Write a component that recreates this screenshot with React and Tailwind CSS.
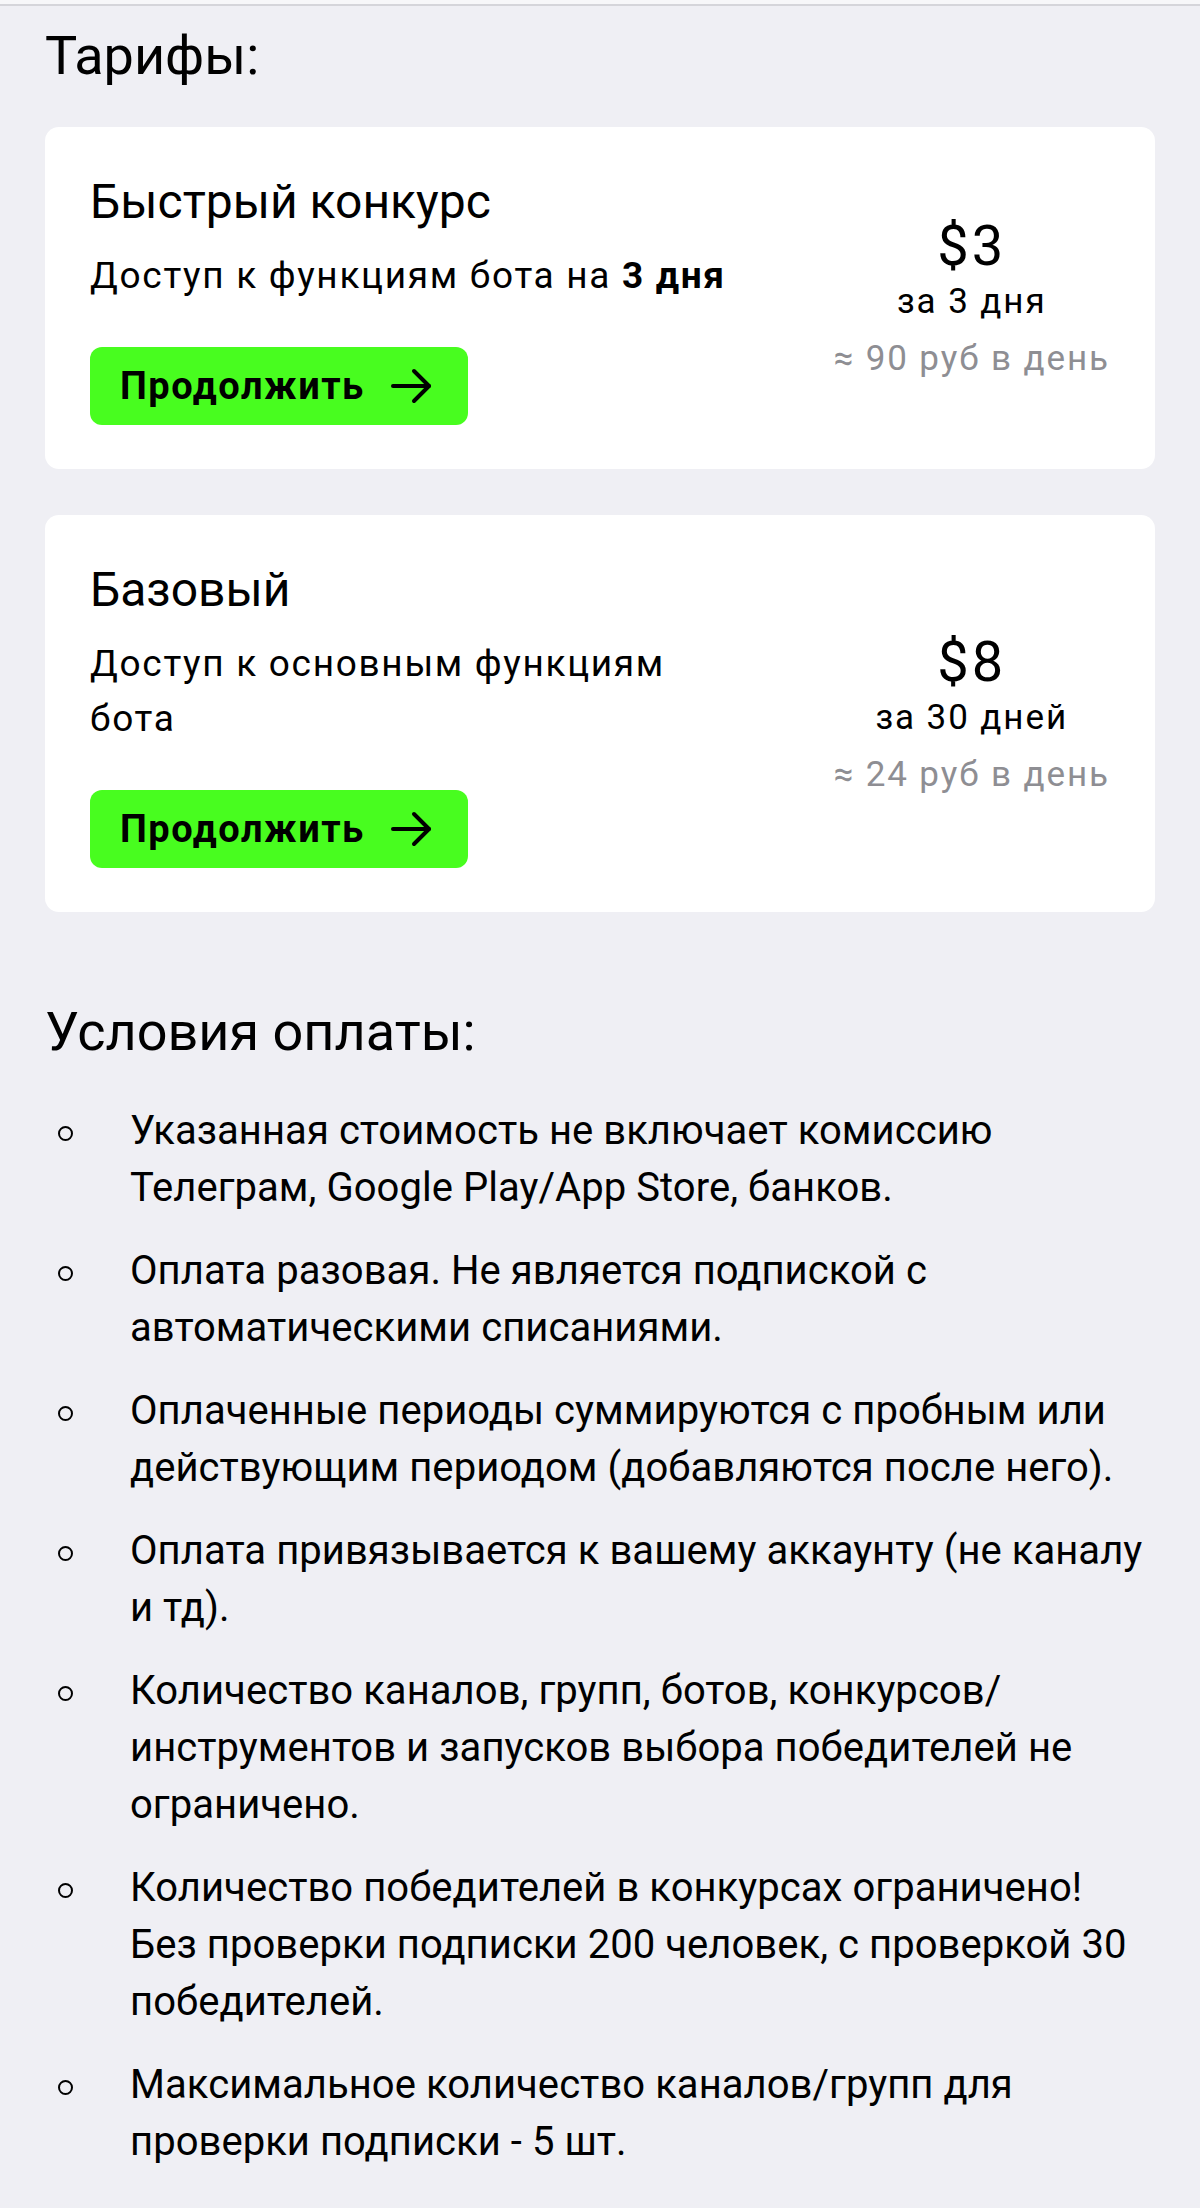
import React from 'react';

const plans = [
  {
    title: 'Быстрый конкурс',
    desc: [
      <>
        Доступ к функциям бота на <b className="font-bold">3 дня</b>
      </>,
    ],
    price: '$3',
    period: 'за 3 дня',
    perDay: '≈ 90 руб в день',
  },
  {
    title: 'Базовый',
    desc: ['Доступ к основным функциям', 'бота'],
    price: '$8',
    period: 'за 30 дней',
    perDay: '≈ 24 руб в день',
  },
];

const terms = [
  ['Указанная стоимость не включает комиссию', 'Телеграм, Google Play/App Store, банков.'],
  ['Оплата разовая. Не является подпиской с', 'автоматическими списаниями.'],
  ['Оплаченные периоды суммируются с пробным или', 'действующим периодом (добавляются после него).'],
  ['Оплата привязывается к вашему аккаунту (не каналу', 'и тд).'],
  ['Количество каналов, групп, ботов, конкурсов/', 'инструментов и запусков выбора победителей не', 'ограничено.'],
  ['Количество победителей в конкурсах ограничено!', 'Без проверки подписки 200 человек, с проверкой 30', 'победителей.'],
  ['Максимальное количество каналов/групп для', 'проверки подписки - 5 шт.'],
];

const Arrow = () => (
  <svg width="42" height="36" viewBox="0 0 42 36" fill="none" stroke="currentColor" strokeWidth="4" strokeLinecap="round" strokeLinejoin="round">
    <path d="M2 18h36" />
    <path d="M23 3l15 15-15 15" />
  </svg>
);

const PlanCard = ({ plan }) => (
  <div className="flex items-center gap-[40px] rounded-[14px] bg-white px-[45px] pt-[45px] pb-[44px]">
    <div className="flex flex-1 flex-col items-start">
      <h3 className="text-[48px] leading-[60px] font-normal text-black">{plan.title}</h3>
      <div className="mt-[16px] text-[37px] leading-[55px] tracking-[1.7px] text-black">
        {plan.desc.map((line, i) => (
          <span key={i} className="block whitespace-nowrap">{line}</span>
        ))}
      </div>
      <button className="mt-[44px] flex h-[78px] w-[378px] items-center gap-[26px] rounded-[12px] bg-[#48fd1f] pl-[30px] text-[38px] font-bold tracking-[1.5px] text-black">
        Продолжить
        <Arrow />
      </button>
    </div>
    <div className="flex shrink-0 flex-col items-center text-center">
      <div className="text-[56px] leading-[56px] tracking-[3px] text-black">{plan.price}</div>
      <div className="mt-[8px] whitespace-nowrap text-[35px] leading-[40px] tracking-[1.9px] text-black">{plan.period}</div>
      <div className="mt-[17px] whitespace-nowrap text-[35px] leading-[40px] tracking-[1.9px] text-[#8e8e93]">{plan.perDay}</div>
    </div>
  </div>
);

export default function App() {
  return (
    <div className="min-h-[2208px] bg-[#efeff4] font-['Roboto',sans-serif] text-black">
      <div className="h-[4px] bg-[#f7f7f9]" />
      <div className="h-[2px] bg-[#d5d5da]" />

      <div className="px-[45px]">
        <h2 className="mt-[16px] text-[54px] leading-[68px] font-normal">Тарифы:</h2>

        <div className="mt-[37px] flex flex-col gap-[46px]">
          {plans.map((p) => (
            <PlanCard key={p.title} plan={p} />
          ))}
        </div>

        <h2 className="mt-[86px] text-[54px] leading-[68px] font-normal">Условия оплаты:</h2>

        <ul className="mt-[36px] flex flex-col gap-[26px]">
          {terms.map((lines, i) => (
            <li key={i} className="flex">
              <div className="mt-[3px] flex h-[57px] w-[85px] shrink-0 items-center">
                <span className="ml-[13px] block h-[15px] w-[15px] rounded-full border-[2.5px] border-black" />
              </div>
              <p className="text-[40px] leading-[57px] tracking-[0.05px]">
                {lines.map((l, j) => (
                  <span key={j} className="block whitespace-nowrap">{l}</span>
                ))}
              </p>
            </li>
          ))}
        </ul>
      </div>
    </div>
  );
}
